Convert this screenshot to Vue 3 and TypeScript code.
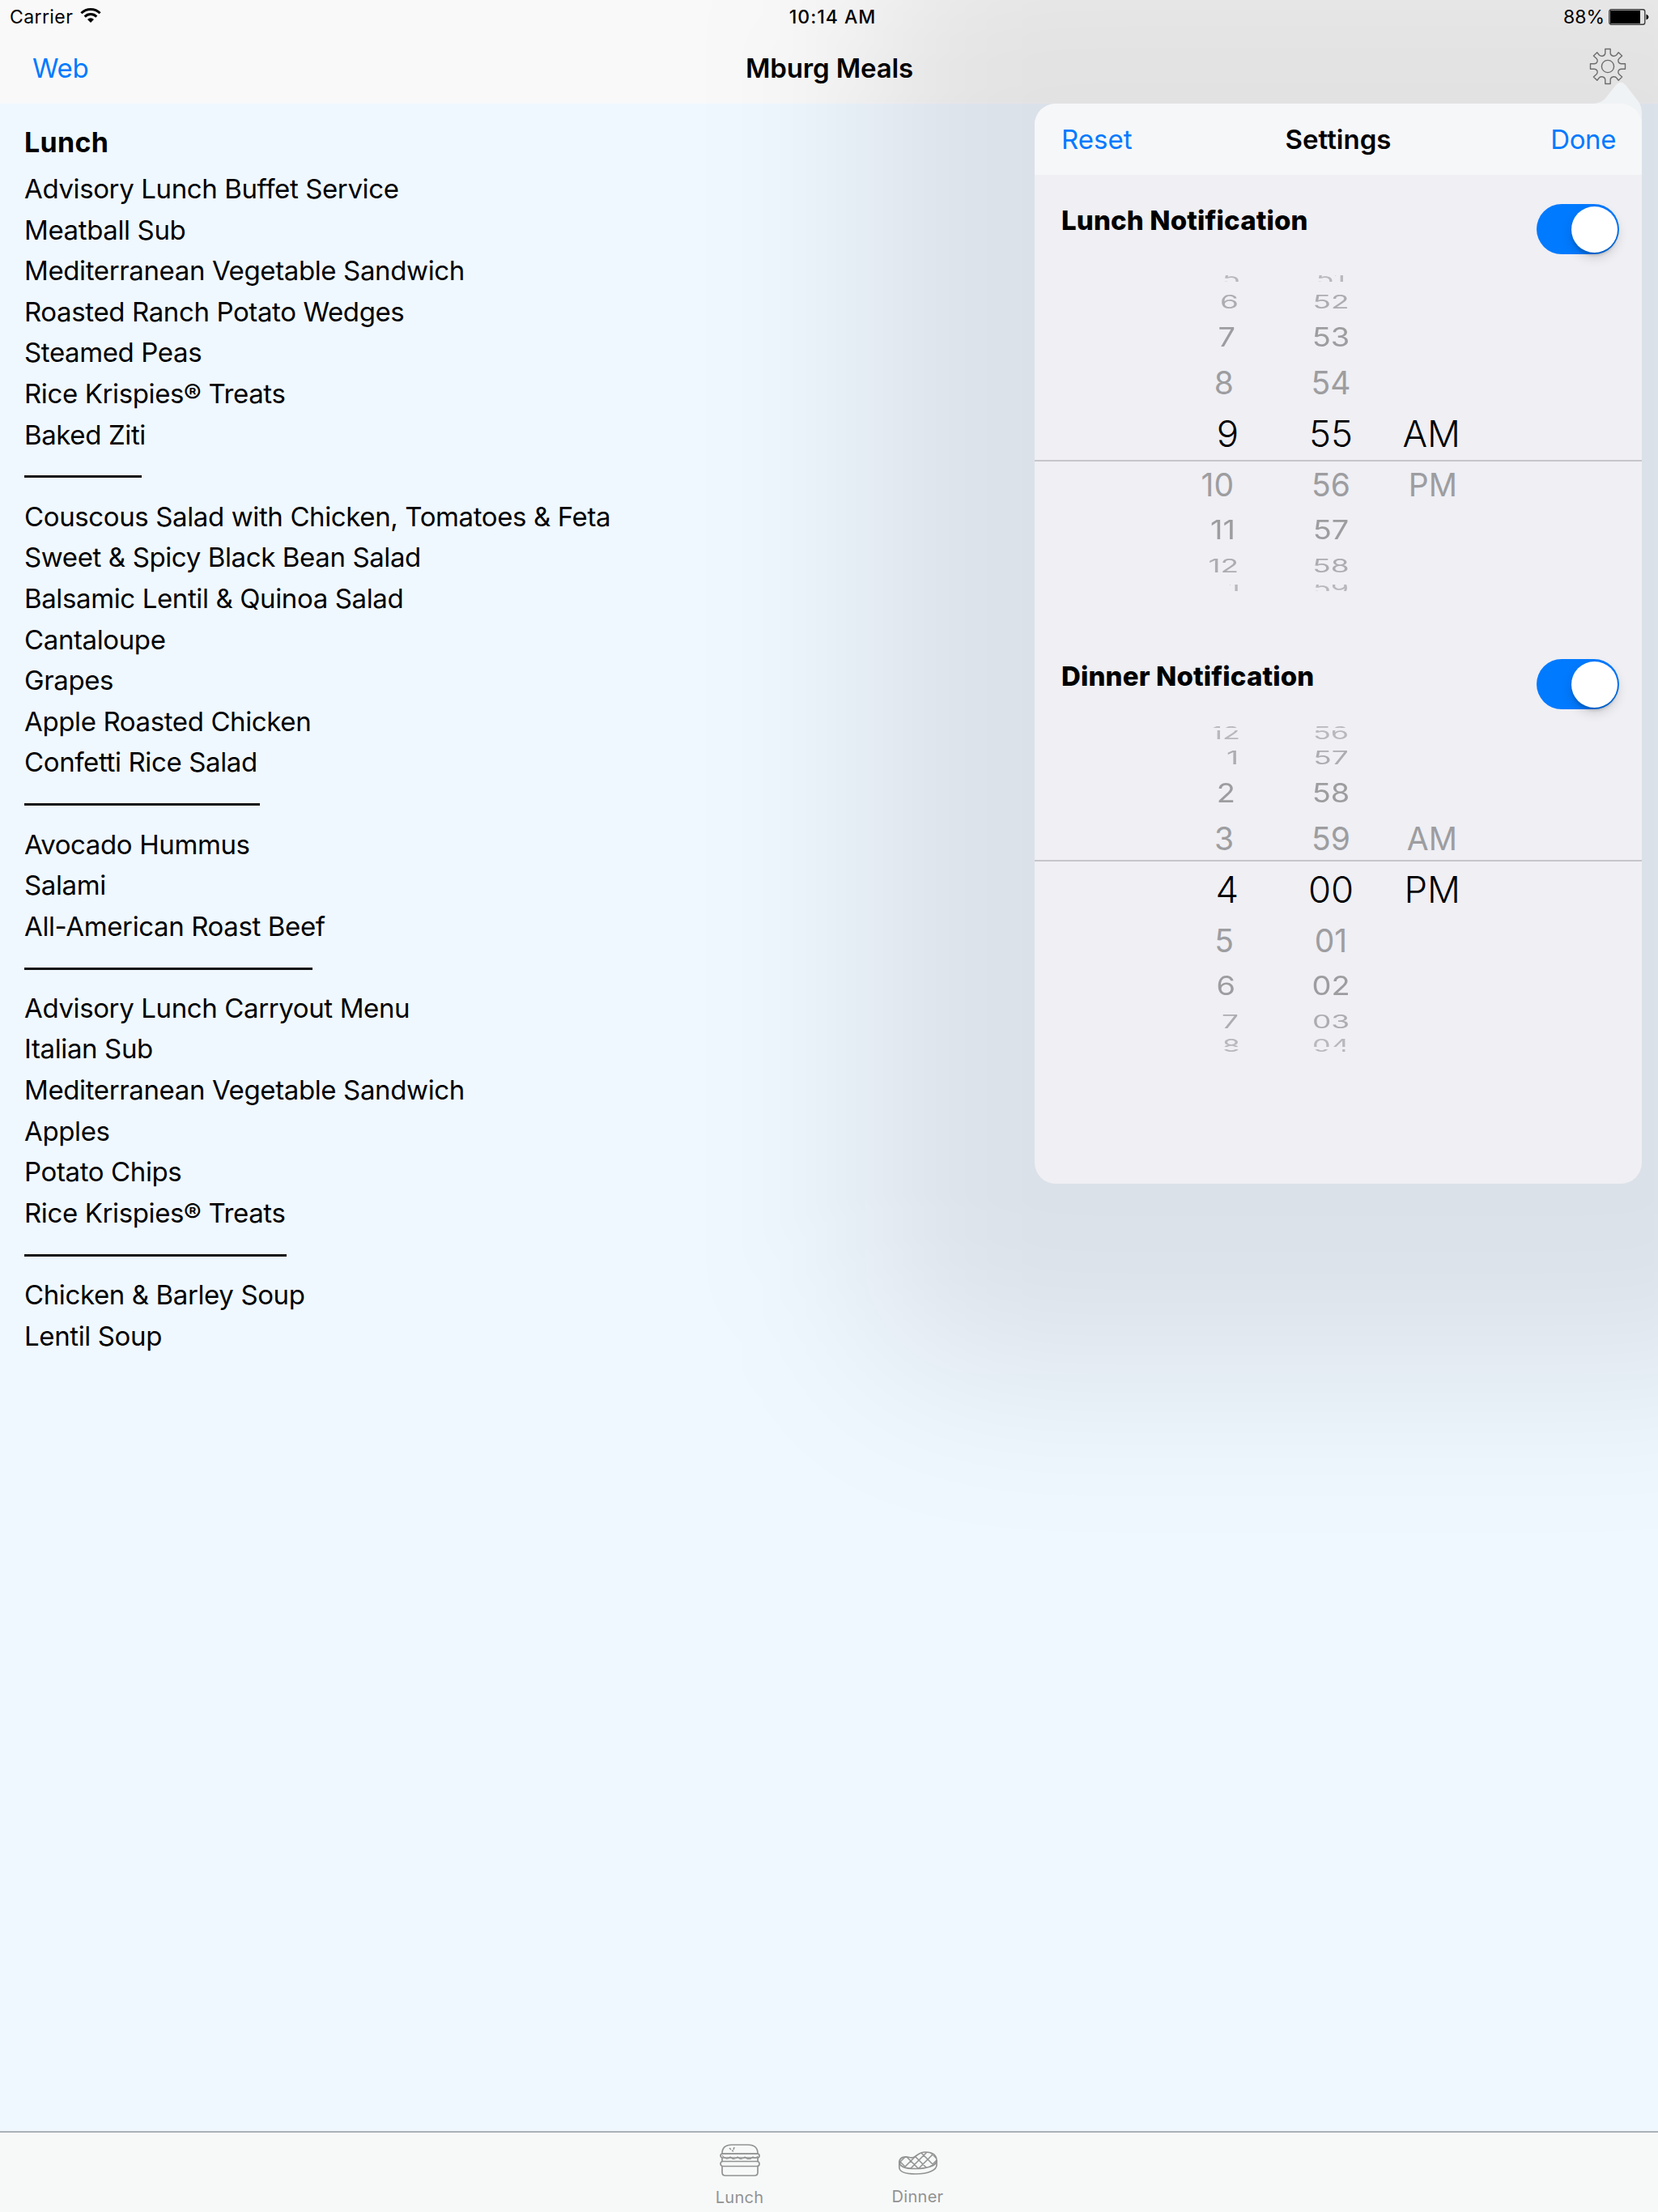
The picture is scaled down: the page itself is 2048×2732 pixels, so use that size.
<script setup lang="ts">
interface WheelRow {
  hour: string
  minute: string
  period?: string
}

interface Reminder {
  id: string
  title: string
  rows: WheelRow[]
}

const menuTitle = 'Lunch'

/* A number stands for a divider of that width. */
const menu: (string | number)[] = [
  'Advisory Lunch Buffet Service',
  'Meatball Sub',
  'Mediterranean Vegetable Sandwich',
  'Roasted Ranch Potato Wedges',
  'Steamed Peas',
  'Rice Krispies® Treats',
  'Baked Ziti',
  145,
  'Couscous Salad with Chicken, Tomatoes & Feta',
  'Sweet & Spicy Black Bean Salad',
  'Balsamic Lentil & Quinoa Salad',
  'Cantaloupe',
  'Grapes',
  'Apple Roasted Chicken',
  'Confetti Rice Salad',
  291,
  'Avocado Hummus',
  'Salami',
  'All-American Roast Beef',
  356,
  'Advisory Lunch Carryout Menu',
  'Italian Sub',
  'Mediterranean Vegetable Sandwich',
  'Apples',
  'Potato Chips',
  'Rice Krispies® Treats',
  324,
  'Chicken & Barley Soup',
  'Lentil Soup',
]

const reminders: Reminder[] = [
  {
    id: 'lunch',
    title: 'Lunch Notification',
    rows: [
      { hour: '5', minute: '51' },
      { hour: '6', minute: '52' },
      { hour: '7', minute: '53' },
      { hour: '8', minute: '54' },
      { hour: '9', minute: '55', period: 'AM' },
      { hour: '10', minute: '56', period: 'PM' },
      { hour: '11', minute: '57' },
      { hour: '12', minute: '58' },
      { hour: '1', minute: '59' },
    ],
  },
  {
    id: 'dinner',
    title: 'Dinner Notification',
    rows: [
      { hour: '12', minute: '56' },
      { hour: '1', minute: '57' },
      { hour: '2', minute: '58' },
      { hour: '3', minute: '59', period: 'AM' },
      { hour: '4', minute: '00', period: 'PM' },
      { hour: '5', minute: '01' },
      { hour: '6', minute: '02' },
      { hour: '7', minute: '03' },
      { hour: '8', minute: '04' },
    ],
  },
]

const level = (index: number) => [`level-${Math.abs(index - 4)}`, index < 4 ? 'above' : 'below']
</script>

<template>
  <div class="screen">
    <header class="bar">
      <div class="status">
        <div class="carrier">
          <span>Carrier</span>
          <svg width="26" height="20" viewBox="0 0 26 20">
            <g fill="none" stroke="#000" stroke-width="3">
              <path d="M1.4 7.2 A16.5 16.5 0 0 1 24.6 7.2" />
              <path d="M5.7 11.6 A10.4 10.4 0 0 1 20.3 11.6" />
            </g>
            <path d="M9 14.9 A5.7 5.7 0 0 1 17 14.9 L13 19 Z" fill="#000" />
          </svg>
        </div>
        <span class="clock">10:14 AM</span>
        <div class="power">
          <span>88%</span>
          <svg width="50" height="20" viewBox="0 0 50 20">
            <rect x="0.8" y="0.8" width="44" height="18.4" rx="2.5" fill="#f5f5f5" stroke="#444" stroke-width="1.4" />
            <rect x="2" y="2" width="37" height="16" fill="#000" />
            <path d="M46.500 6.500 Q49.500 8 49.500 10 Q49.500 12 46.500 13.500 Z" fill="#000" />
          </svg>
        </div>
      </div>
      <div class="nav">
        <a class="web">Web</a>
        <h1>Mburg Meals</h1>
        <svg class="gear" width="46" height="46" viewBox="0 0 46 46" fill="none" stroke="#777" stroke-width="1.4" stroke-linejoin="round">
          <circle cx="23" cy="23" r="7.6" />
          <path d="M19.8 1.5 H26.2 V6.6 Q26.4 9.2 29 10 Q31.6 10.9 33.6 9 L36.2 5.8 L40.6 10 L37 13.2 Q35.2 15 36 17.2 Q37 19.8 39.8 19.8 H44.5 V26.2 H39.8 Q37 26.2 36 28.8 Q35.2 31 37 32.8 L40.6 36 L36.2 40.3 L33.6 37 Q31.6 35.1 29 36 Q26.4 36.8 26.2 39.4 V44.5 H19.8 V39.4 Q19.6 36.8 17 36 Q14.4 35.1 12.4 37 L9.8 40.3 L5.4 36 L9 32.8 Q10.8 31 10 28.8 Q9 26.2 6.2 26.2 H1.5 V19.8 H6.2 Q9 19.8 10 17.2 Q10.8 15 9 13.2 L5.4 10 L9.8 5.8 L12.4 9 Q14.4 10.9 17 10 Q19.6 9.2 19.8 6.6 Z" />
        </svg>
      </div>
    </header>

    <main class="menu">
      <h2>{{ menuTitle }}</h2>
      <template v-for="(entry, index) in menu" :key="index">
        <p v-if="typeof entry === 'string'">{{ entry }}</p>
        <div v-else class="divider"><i :style="{ width: `${entry}px` }"></i></div>
      </template>
    </main>

    <footer class="tabs">
      <div class="tab">
        <svg width="50" height="44" viewBox="0 0 50 44" fill="none" stroke="#929292" stroke-width="1.7">
          <path d="M3 13 Q3 2 15 2 H35 Q47 2 47 13 Z" />
          <rect x="1" y="13" width="48" height="5" rx="2.5" />
          <path d="M3 15 Q8 22 13 17 Q18 22 22 17 Q27 22 31 17 Q36 22 41 17 Q44 20 47 16" stroke-width="1.2" />
          <rect x="1" y="22.5" width="48" height="6" rx="3" />
          <path d="M3 18 V23 M47 18 V23 M3 28.500 V36 Q3 40 7 40 H43 Q47 40 47 36 V28.500" />
          <path d="M12 6 l2 2 M18 5 l-1 3 M15 9 l2 1" stroke-width="1.6" />
        </svg>
        <span>Lunch</span>
      </div>
      <div class="tab dinner-tab">
        <svg width="50" height="44" viewBox="0 0 50 44">
          <defs>
            <clipPath id="steak-face">
              <path d="M2 22 C3 17 9 16 14 17.500 C23 20 23 11 34 11 C43 11 48 15 48 22 C47 28 36 31.500 22 31.500 C9 31.500 1 29 2 22 Z" />
            </clipPath>
          </defs>
          <g fill="none" stroke="#929292" stroke-width="1.7">
            <path d="M2 22 C3 17 9 16 14 17.500 C23 20 23 11 34 11 C43 11 48 15 48 22 C47 28 36 31.500 22 31.500 C9 31.500 1 29 2 22 Z" />
            <path d="M1.800 22 V30 C2 36 10 38 22 38 C38 38 48 33 48 27 V21" />
            <path clip-path="url(#steak-face)" stroke-width="1.5" d="M-4 16 L18 38 M6 12 L30 36 M17 12 L41 36 M27 10 L51 34 M37 8 L57 28 M14 12 L-8 34 M26 12 L2 36 M37 10 L12 35 M47 10 L22 35 M57 12 L32 37" />
          </g>
        </svg>
        <span>Dinner</span>
      </div>
    </footer>

    <section class="popover">
      <div class="shade"></div>
      <svg class="arrow" width="60" height="58" viewBox="0 0 60 58">
        <path d="M0 28 Q9 28 15 21.500 L28 5 Q34 -2 40 5 L54 23 Q60 30 60 40 V58 H30 L0 29 Z" fill="#f0f3f5" />
      </svg>
      <div class="card">
        <div class="card-bar">
          <a>Reset</a>
          <h3>Settings</h3>
          <a class="done">Done</a>
        </div>
        <div v-for="reminder in reminders" :key="reminder.id" class="reminder" :class="reminder.id">
          <div class="reminder-head">
            <h4>{{ reminder.title }}</h4>
            <div class="switch"><i></i></div>
          </div>
          <div class="wheel">
            <div v-for="(row, index) in reminder.rows" :key="index" class="row" :class="level(index)">
              <span class="hour"><b>{{ row.hour }}</b></span>
              <span class="minute"><b>{{ row.minute }}</b></span>
              <span class="period"><b>{{ row.period }}</b></span>
            </div>
          </div>
        </div>
      </div>
    </section>
  </div>
</template>

<style>
body {
  margin: 0;
}
</style>

<style scoped>
.screen {
  position: relative;
  display: flex;
  flex-direction: column;
  width: 2048px;
  height: 2732px;
  overflow: hidden;
  background: #f0f8ff;
  color: #000;
  font-family: Inter, "Liberation Sans", sans-serif;
  font-size: 33px;
}

h1, h2, h3, h4, p {
  margin: 0;
  white-space: nowrap;
}

a {
  color: #007aff;
}

.bar {
  height: 128px;
  background: #f9f9f9;
}

.status {
  display: grid;
  grid-template-columns: 1fr auto 1fr;
  align-items: center;
  height: 42px;
  padding: 0 11px 0 12px;
  font-size: 23px;
}

.carrier,
.power {
  display: flex;
  align-items: center;
}

.carrier {
  gap: 9px;
  letter-spacing: 0.4px;
}

.carrier svg {
  margin-top: -4px;
}

.clock {
  font-weight: 500;
  letter-spacing: 1px;
  margin-left: 8px;
}

.power {
  justify-content: flex-end;
  gap: 5px;
}

.nav {
  display: grid;
  grid-template-columns: 1fr auto 1fr;
  align-items: center;
  height: 84px;
  padding: 0 39px 0 40px;
}

h1, h3 {
  font-size: 33px;
  font-weight: 600;
}

h1 {
  letter-spacing: -0.15px;
}

h3 {
  margin-left: -1px;
}

.web {
  letter-spacing: -0.3px;
}

.gear {
  justify-self: end;
  margin-top: -4px;
}

.menu {
  flex: 1;
  padding: 18px 0 0 30px;
}

h2 {
  height: 62px;
  font-size: 34px;
  line-height: 60px;
  font-weight: 700;
  letter-spacing: 0.3px;
}

.menu p,
.divider {
  height: 50.6px;
  line-height: 50.6px;
  letter-spacing: -0.38px;
}

.divider {
  display: flex;
  align-items: center;
}

.divider i {
  height: 3px;
  margin-top: 3px;
  background: #111;
}

.tabs {
  display: flex;
  justify-content: center;
  height: 98px;
  padding-right: 1px;
  border-top: 2px solid #a9b1b8;
  background: #f7f9f9;
  color: #929292;
  font-size: 20px;
  letter-spacing: 0.3px;
}

.tab {
  display: flex;
  flex-direction: column;
  align-items: center;
  width: 220px;
  padding-top: 13px;
}

.tab span {
  margin-top: 11px;
  line-height: 24px;
}

.dinner-tab span {
  margin-top: 10px;
}

.popover {
  position: absolute;
  top: 128px;
  left: 1278px;
  width: 750px;
  height: 1334px;
}

.shade {
  position: absolute;
  top: -220px;
  left: -210px;
  right: -210px;
  bottom: -235px;
  border-radius: 140px;
  background: rgba(14, 0, 10, 0.092);
  filter: blur(105px);
}

.arrow {
  position: absolute;
  top: -28px;
  right: 0;
}

.card {
  position: relative;
  height: 100%;
  overflow: hidden;
  border-radius: 26px;
  background: #efeff4;
}

.card-bar {
  display: grid;
  grid-template-columns: 1fr auto 1fr;
  align-items: center;
  height: 88px;
  padding: 0 32px 0 33px;
  background: #f6f7f9;
}

.done {
  justify-self: end;
  letter-spacing: -0.4px;
}

.reminder-head {
  display: flex;
  justify-content: space-between;
  padding: 36px 28px 0 33px;
  height: 81px;
}

.dinner .reminder-head {
  padding-top: 41px;
  height: 82px;
}

.lunch {
  height: 557px;
}

h4 {
  font-size: 33px;
  line-height: 40px;
  font-weight: 800;
  letter-spacing: 0.15px;
}

.dinner h4 {
  margin-top: 1px;
}

.switch {
  display: flex;
  justify-content: flex-end;
  box-sizing: border-box;
  width: 102px;
  height: 62px;
  padding: 2.500px;
  border-radius: 31px;
  background: #007aff;
}

.switch i {
  width: 57px;
  height: 57px;
  border-radius: 50%;
  background: #fff;
  box-shadow: 0 6px 14px rgba(0, 0, 0, 0.15), 0 4px 3px rgba(0, 0, 0, 0.12);
}

.wheel {
  position: relative;
}

.wheel::after {
  content: "";
  position: absolute;
  left: 0;
  right: 0;
  height: 2px;
  background: #c6c6ca;
}

.lunch .wheel::after {
  top: 235px;
}

.dinner .wheel::after {
  top: 166px;
}

.row {
  display: flex;
  align-items: center;
  line-height: 1;
  color: #9d9da0;
}

.row.below {
  transform: translateY(1px);
}

.row b {
  display: block;
  font-weight: 400;
}

.hour {
  width: 252px;
  text-align: right;
}

.minute {
  width: 228px;
  text-align: center;
}

.period {
  width: 46px;
  direction: rtl;
}

.row.level-0 {
  height: 67px;
  font-size: 45.5px;
  color: #000;
}

.row.level-0 b {
  font-weight: 300;
}

.row.level-1 {
  height: 58px;
  font-size: 39px;
}

.row.level-1 .hour {
  width: 246px;
  margin-right: 6px;
}

.row.level-1 .period {
  width: 42px;
}

.row.level-2 {
  height: 54px;
  font-size: 38px;
}

.row.level-2 .hour {
  width: 248px;
  margin-right: 4px;
}

.row.level-2 b {
  transform: scaleY(0.86);
}

.row.level-3 {
  height: 34px;
  font-size: 37px;
  color: #adadb1;
}

.row.level-3 b {
  transform: scaleY(0.61);
}

.row.level-4 {
  height: 22px;
  font-size: 36px;
  color: #b9b9bd;
}

.row.level-4 .hour {
  width: 254px;
  margin-right: -2px;
}

.row.level-4 b {
  transform: scaleY(0.6);
}

/* The outermost rows roll out of sight, so only part of each digit shows. */
.lunch .level-4 {
  clip-path: inset(7px 0);
}

.dinner .level-4.above {
  transform: translateY(-2px);
  mask-image: linear-gradient(#000 5px, transparent 5px, transparent 8px, #000 8px);
}

.dinner .level-4.below {
  transform: translateY(3px);
  mask-image: linear-gradient(#000 13px, transparent 13px, transparent 16px, #000 16px);
}
</style>
